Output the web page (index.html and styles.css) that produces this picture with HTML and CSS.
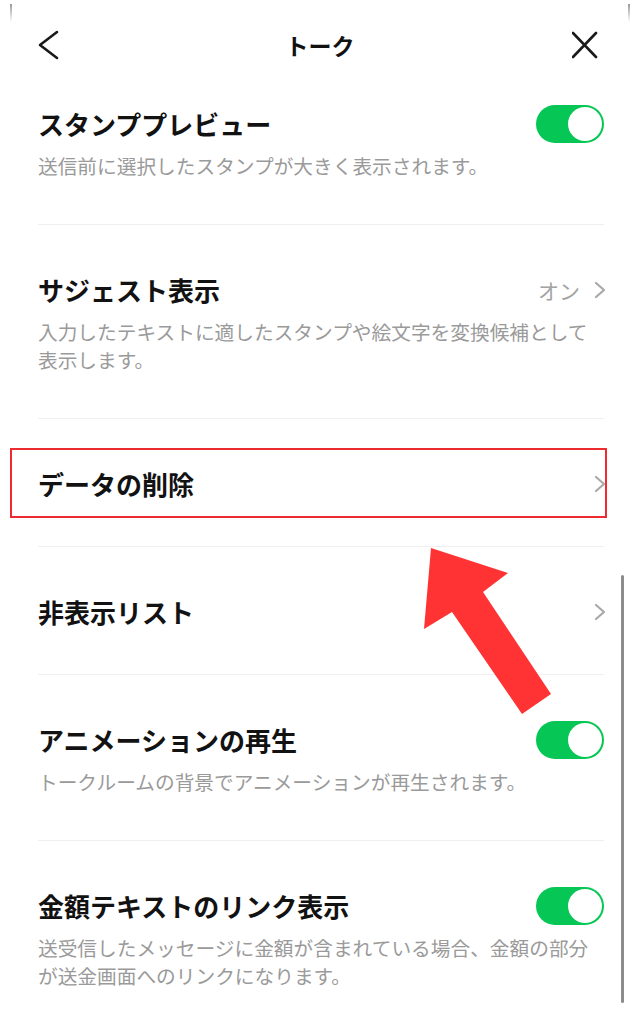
FILE: index.html
```html
<!DOCTYPE html>
<html lang="ja">
<head>
    <meta charset="UTF-8">
    <meta name="viewport" content="width=device-width, initial-scale=1.0">
    <title>トーク</title>
    <link rel="stylesheet" href="styles.css">
</head>
<body>
    <div class="screen">
        <span class="corner-mark left"></span>
        <span class="corner-mark right"></span>

        <div class="header">
            <svg class="back-icon" width="28" height="30" viewBox="0 0 28 30">
                <path d="M21 2 L4 15 L21 28" />
            </svg>
            <div class="header-title">トーク</div>
            <svg class="close-icon" width="32" height="30" viewBox="0 0 32 30">
                <path d="M1 3 L24 27 M24 3 L1 27" />
            </svg>
        </div>

        <div class="list">
            <div class="row first">
                <div class="row-head">
                    <div class="row-title">スタンププレビュー</div>
                    <div class="toggle"></div>
                </div>
                <div class="row-desc">送信前に選択したスタンプが大きく表示されます。</div>
            </div>

            <div class="row">
                <div class="row-head">
                    <div class="row-title">サジェスト表示</div>
                    <div class="row-value">
                        <span>オン</span>
                        <svg class="chevron" width="12" height="18" viewBox="0 0 12 18">
                            <path d="M2 2 L10 9 L2 16" />
                        </svg>
                    </div>
                </div>
                <div class="row-desc">入力したテキストに適したスタンプや絵文字を変換候補として表示します。</div>
            </div>

            <div class="row">
                <div class="row-head">
                    <div class="row-title">データの削除</div>
                    <svg class="chevron" width="12" height="18" viewBox="0 0 12 18">
                        <path d="M2 2 L10 9 L2 16" />
                    </svg>
                </div>
                <div class="highlight-box"></div>
            </div>

            <div class="row">
                <div class="row-head">
                    <div class="row-title">非表示リスト</div>
                    <svg class="chevron" width="12" height="18" viewBox="0 0 12 18">
                        <path d="M2 2 L10 9 L2 16" />
                    </svg>
                </div>
            </div>

            <div class="row">
                <div class="row-head">
                    <div class="row-title">アニメーションの再生</div>
                    <div class="toggle"></div>
                </div>
                <div class="row-desc">トークルームの背景でアニメーションが再生されます。</div>
            </div>

            <div class="row last">
                <div class="row-head">
                    <div class="row-title">金額テキストのリンク表示</div>
                    <div class="toggle"></div>
                </div>
                <div class="row-desc">送受信したメッセージに金額が含まれている場合、金額の部分が送金画面へのリンクになります。</div>
            </div>
        </div>

        <div class="scrollbar"></div>

        <svg class="arrow" width="640" height="1011" viewBox="0 0 640 1011">
            <polygon points="431,548 508,573 483,592 551,694 522,714 452,612 424,629" />
        </svg>
    </div>
</body>
</html>
```

FILE: styles.css
```css
body {
    margin: 0;
    background-color: #ffffff;
    font-family: "Noto Sans CJK JP", "Noto Sans", sans-serif;
    color: #111111;
}
.screen {
    position: relative;
    width: 640px;
    height: 1011px;
    overflow: hidden;
}
.corner-mark {
    position: absolute;
    top: 4px;
    width: 2px;
    height: 18px;
    background: linear-gradient(#9a9a9a, rgba(200, 200, 200, 0));
}
.corner-mark.left {
    left: 10px;
}
.corner-mark.right {
    left: 628px;
}
.header {
    height: 90px;
    padding: 0 36px;
    display: grid;
    grid-template-columns: 1fr auto 1fr;
    align-items: center;
}
.back-icon,
.close-icon {
    fill: none;
    stroke: #1a1a1a;
    stroke-width: 2.6;
    stroke-linecap: round;
    stroke-linejoin: round;
}
.back-icon {
    justify-self: start;
}
.close-icon {
    justify-self: end;
}
.header-title {
    font-size: 23px;
    font-weight: 700;
    line-height: 30px;
}
.list {
    padding: 0 36px 0 38px;
}
.row {
    position: relative;
    padding: 47px 0 44px;
    border-bottom: 1px solid #efefef;
}
.row.first {
    padding-top: 16px;
}
.row.last {
    border-bottom: none;
}
.row-head {
    height: 36px;
    display: flex;
    align-items: center;
    justify-content: space-between;
}
.row-title {
    font-size: 26px;
    font-weight: 700;
    line-height: 36px;
    color: #121212;
}
.row-desc {
    margin-top: 10px;
    font-size: 19.7px;
    line-height: 28px;
    color: #9a9a9a;
}
.row-value {
    display: flex;
    align-items: center;
    gap: 14px;
    font-size: 21px;
    color: #a3a3a3;
}
.chevron {
    fill: none;
    stroke: #a8a8a8;
    stroke-width: 2.2;
    stroke-linecap: round;
    stroke-linejoin: round;
    margin-right: -2px;
}
.toggle {
    position: relative;
    width: 68px;
    height: 38px;
    border-radius: 19px;
    background-color: #06c755;
}
.toggle::after {
    content: "";
    position: absolute;
    top: 2px;
    right: 2px;
    width: 34px;
    height: 34px;
    border-radius: 50%;
    background-color: #ffffff;
}
.highlight-box {
    position: absolute;
    left: -28px;
    right: -3px;
    top: 29px;
    height: 66px;
    border: 2px solid #ee2b2f;
}
.scrollbar {
    position: absolute;
    left: 621px;
    top: 575px;
    width: 3px;
    height: 428px;
    border-radius: 2px;
    background-color: #8c8c8c;
}
.arrow {
    position: absolute;
    left: 0;
    top: 0;
    pointer-events: none;
}
.arrow polygon {
    fill: #ff3333;
}
```
